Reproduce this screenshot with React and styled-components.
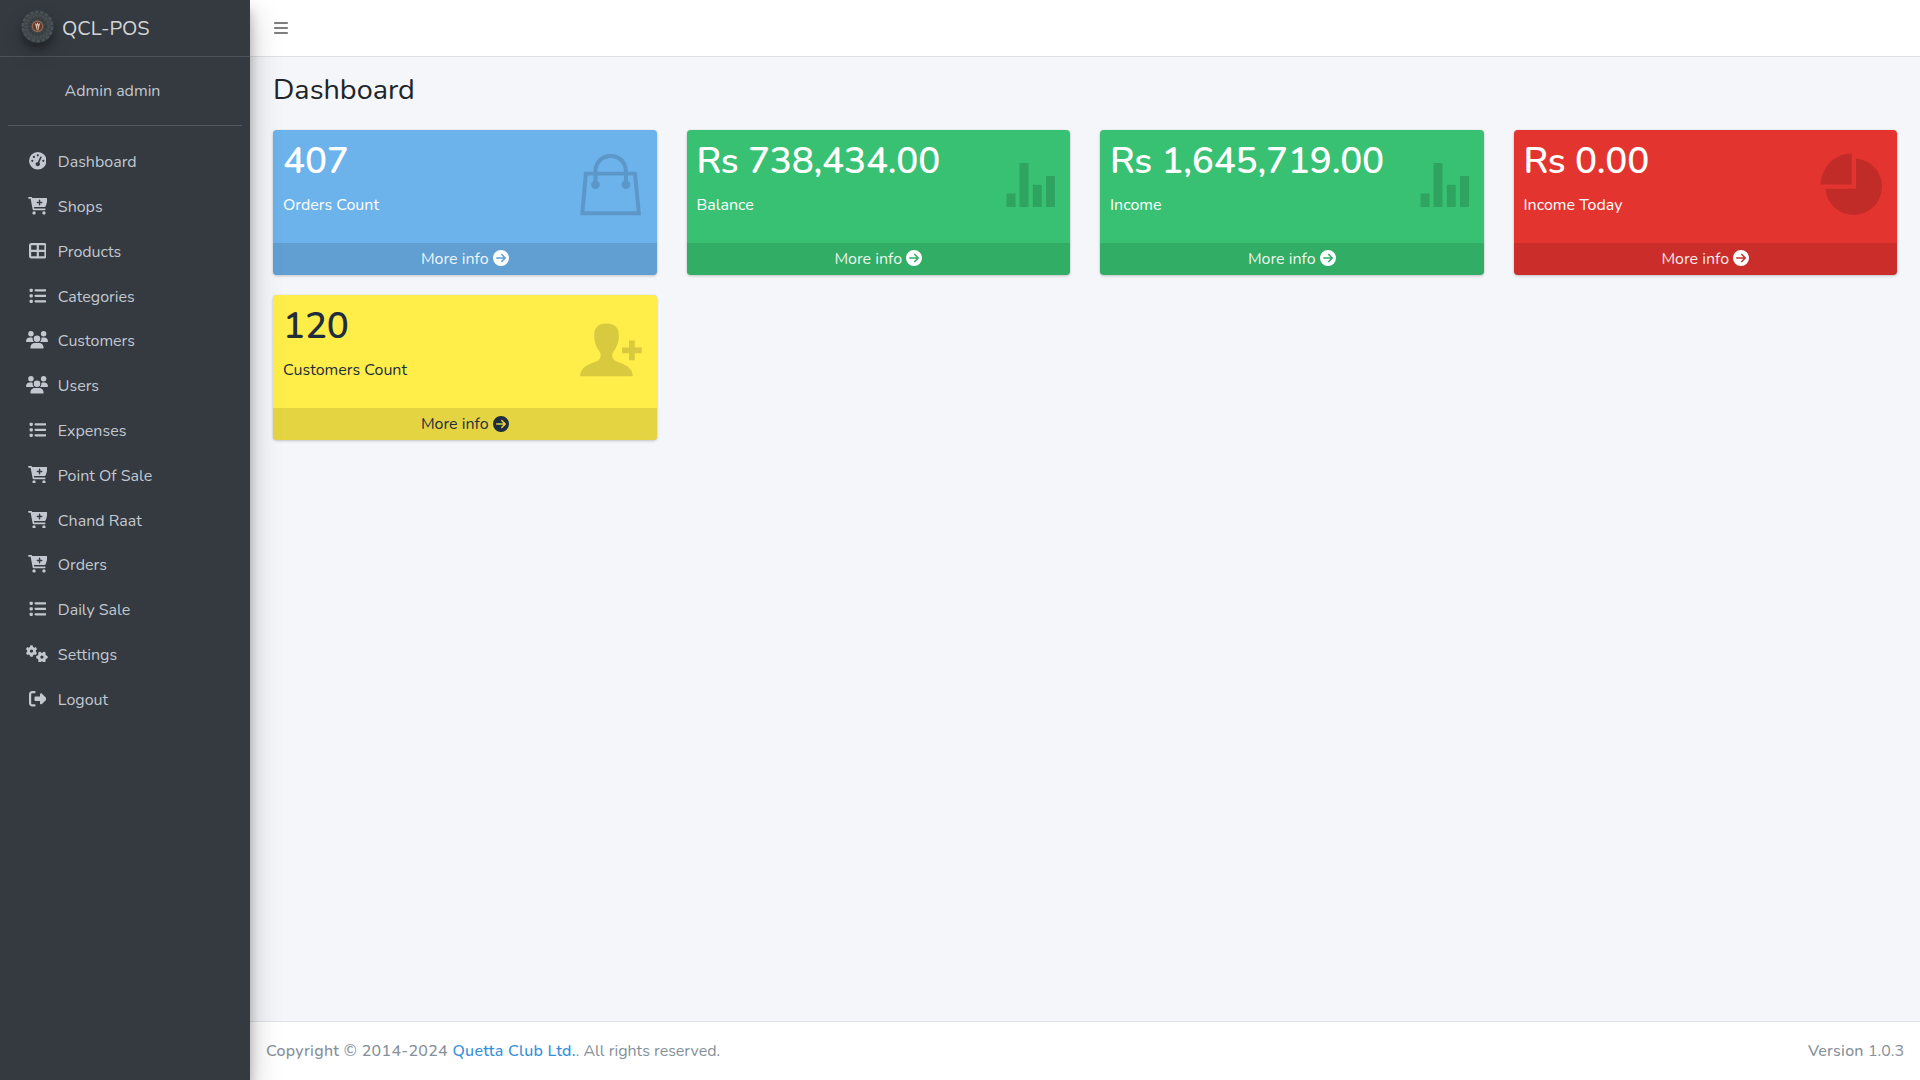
import React from "react";
import styled, { createGlobalStyle } from "styled-components";
import {
  FaBars,
  FaCircleArrowRight,
  FaGaugeHigh,
  FaGears,
  FaList,
  FaRightFromBracket,
  FaTableCellsLarge,
  FaUsers,
} from "react-icons/fa6";

const GlobalStyle = createGlobalStyle`
  *, *::before, *::after { box-sizing: border-box; }
  body {
    margin: 0;
    background: #f4f6f9;
    color: #212529;
    font-family: "Nunito", "Nunito Sans", "Lato", "Open Sans", sans-serif;
    font-size: 16px;
    line-height: 1.6;
  }
  a { color: inherit; text-decoration: none; }
`;

const Wrapper = styled.div`
  display: grid;
  grid-template-columns: 250px 1fr;
  height: 100vh;
  overflow: hidden;
`;

const Sidebar = styled.aside`
  position: relative;
  z-index: 2;
  display: flex;
  flex-direction: column;
  background: #343a40;
  color: #c2c7d0;
  box-shadow: 0 14px 28px rgba(0, 0, 0, 0.25), 0 10px 10px rgba(0, 0, 0, 0.22);
`;

const Brand = styled.a`
  display: flex;
  align-items: center;
  gap: 8px;
  height: 57px;
  padding: 1px 8px 0 21px;
  border-bottom: 1px solid #4b545c;
  color: rgba(255, 255, 255, 0.8);
  font-size: 20px;
  line-height: 1.5;
`;

const Logo = styled.svg`
  width: 33px;
  height: 33px;
  margin-top: -4px;
  border-radius: 50%;
  box-shadow: 0 10px 20px rgba(0, 0, 0, 0.19), 0 6px 6px rgba(0, 0, 0, 0.23);
`;

const UserPanel = styled.div`
  display: flex;
  align-items: center;
  height: 69px;
  margin: 0 8px;
  padding: 2px 0 0 56.6px;
  border-bottom: 1px solid #4f5962;
`;

const Nav = styled.nav`
  display: flex;
  flex-direction: column;
  gap: 3.2px;
  margin-top: 16.3px;
  padding: 0 8px;
`;

const NavLink = styled.a`
  display: flex;
  align-items: center;
  gap: 7px;
  height: 41.6px;
  padding: 8px 16px;
`;

const NavIcon = styled.span`
  display: flex;
  justify-content: center;
  width: 26.8px;
  margin-top: -4px;
  svg {
    width: ${(p) => p.$width}px;
    height: 17.6px;
    flex: none;
  }
`;

const Page = styled.div`
  display: flex;
  flex-direction: column;
  min-width: 0;
`;

const TopBar = styled.header`
  display: flex;
  align-items: center;
  height: 57px;
  padding-left: 23px;
  background: #fff;
  border-bottom: 1px solid #dee2e6;
  color: rgba(0, 0, 0, 0.5);
`;

const Content = styled.main`
  flex: 1;
  padding: 16px 23px 0;
`;

const Title = styled.h1`
  margin: 0 0 22px;
  font-size: 28.8px;
  font-weight: 400;
  line-height: 1.2;
`;

const Cards = styled.section`
  display: grid;
  grid-template-columns: repeat(4, 1fr);
  gap: 19.7px 30px;
`;

const Card = styled.article`
  overflow: hidden;
  border-radius: 4px;
  background: ${(p) => p.$bg};
  color: ${(p) => (p.$dark ? "#1f2d3d" : "#fff")};
  box-shadow: 0 0 1px rgba(0, 0, 0, 0.125), 0 1px 3px rgba(0, 0, 0, 0.2);
`;

const CardBody = styled.div`
  display: flex;
  justify-content: space-between;
  height: 113.8px;
  padding: 10px 15px 0 10px;
`;

const Value = styled.h3`
  margin: 0 0 11px;
  font-size: 36.8px;
  font-weight: 590;
  letter-spacing: -0.2px;
  line-height: 42.2px;
  white-space: nowrap;
`;

const Label = styled.p`
  margin: 0;
`;

const CardIcon = styled.svg`
  width: 64px;
  height: 64px;
  margin-top: 12.4px;
  color: rgba(0, 0, 0, 0.15);
  fill: currentColor;
`;

const CardFooter = styled.a`
  display: flex;
  align-items: center;
  justify-content: center;
  gap: 4px;
  height: 31.6px;
  padding-top: 1px;
  background: rgba(0, 0, 0, 0.1);
  color: ${(p) => (p.$dark ? "#1f2d3d" : "rgba(255, 255, 255, 0.92)")};
  svg {
    margin-top: -2.4px;
    color: ${(p) => (p.$dark ? "#1f2d3d" : "#fff")};
  }
`;

const PageFooter = styled.footer`
  display: flex;
  justify-content: space-between;
  padding: 17px 16px 15px;
  background: #fff;
  border-top: 1px solid #dee2e6;
  color: #869099;
`;

const Strong = styled.strong`
  font-weight: 540;
  letter-spacing: ${(p) => p.$spacing}px;
`;

const FooterLink = styled.a`
  color: #3490dc;
  letter-spacing: 0.25px;
`;

function CartPlus() {
  return (
    <svg viewBox="0 0 576 512" fill="currentColor">
      <path d="M96 0C107.5 0 117.4 8.19 119.6 19.51L121.1 32H541.8C562.1 32 578.3 52.25 572.6 72.66L518.6 264.7C514.7 278.5 502.1 288 487.8 288H170.7L179.9 336H488C501.3 336 512 346.7 512 360C512 373.3 501.3 384 488 384H159.1C148.5 384 138.6 375.8 136.4 364.5L76.14 48H24C10.75 48 0 37.25 0 24C0 10.75 10.75 0 24 0H96zM272 180H316V224C316 235 324.1 244 336 244C347 244 356 235 356 224V180H400C411 180 420 171 420 160C420 148.1 411 140 400 140H356V96C356 84.95 347 76 336 76C324.1 76 316 84.95 316 96V140H272C260.1 140 252 148.1 252 160C252 171 260.1 180 272 180zM128 464C128 437.5 149.5 416 176 416C202.5 416 224 437.5 224 464C224 490.5 202.5 512 176 512C149.5 512 128 490.5 128 464zM512 464C512 490.5 490.5 512 464 512C437.5 512 416 490.5 416 464C416 437.5 437.5 416 464 416C490.5 416 512 437.5 512 464z" />
    </svg>
  );
}

const NAV = [
  ["Dashboard", FaGaugeHigh, 17.6],
  ["Shops", CartPlus, 19.8],
  ["Products", FaTableCellsLarge, 17.6],
  ["Categories", FaList, 17.6],
  ["Customers", FaUsers, 22],
  ["Users", FaUsers, 22],
  ["Expenses", FaList, 17.6],
  ["Point Of Sale", CartPlus, 19.8],
  ["Chand Raat", CartPlus, 19.8],
  ["Orders", CartPlus, 19.8],
  ["Daily Sale", FaList, 17.6],
  ["Settings", FaGears, 22],
  ["Logout", FaRightFromBracket, 17.6],
];

const bag = (
  <path
    fillRule="evenodd"
    d="M6 19.7H15.5V18.8C15.5 9 23 1.9 32.7 1.9S49.9 9 49.9 18.8V19.7H58.8L63 63.2H2.2ZM19.5 19.7H45.9V18.8C45.9 11.3 40 5.9 32.7 5.9S19.5 11.3 19.5 18.8ZM9.7 23.6L6.5 59.3H58.7L55.2 23.6H49.9V28.7A4.4 4.4 0 1 1 45.9 28.7V23.6H19.5V28.7A4.4 4.4 0 1 1 15.5 28.7V23.6Z"
  />
);

const bars = (
  <>
    <path d="M15.5 41.5h9v13.5h-9z" />
    <path d="M28.5 11h9v44h-9z" />
    <path d="M41.8 32.7h9v22.3h-9z" />
    <path d="M55 24h9v31h-9z" />
  </>
);

const pie = (
  <>
    <path d="M33.7 1.5V32.5H2.7A31 31 0 0 1 33.7 1.5Z" />
    <path d="M38 6.5A28.3 28.3 0 1 1 7.5 36.7H38Z" />
  </>
);

const person = (
  <>
    <path d="M28.5 6.4C37 6.4 41 10.8 40.9 18.5C40.9 25 38.8 30.5 35.5 34.5C33.8 37 33.8 41 36.3 43C41.5 46.5 54.8 48 54.8 59.2H2.2C2.2 48 15.5 46.5 20.7 43C23.2 41 23.2 37 21.5 34.5C18.2 30.5 16.2 25 16.2 18.5C16.1 10.8 20 6.4 28.5 6.4Z" />
    <path d="M51 23.4h5.8v7h7v5.8h-7v7h-5.8v-7h-7v-5.8h7z" />
  </>
);

const CARDS = [
  { value: "407", label: "Orders Count", bg: "#6cb2eb", icon: bag },
  { value: "Rs 738,434.00", label: "Balance", bg: "#38c172", icon: bars },
  { value: "Rs 1,645,719.00", label: "Income", bg: "#38c172", icon: bars },
  { value: "Rs 0.00", label: "Income Today", bg: "#e3342f", icon: pie },
  { value: "120", label: "Customers Count", bg: "#ffed4a", icon: person, dark: true },
];

function BrandLogo() {
  return (
    <Logo viewBox="0 0 33 33">
      <circle cx="16.5" cy="16.5" r="14" fill="#40474b" />
      <circle cx="16.5" cy="16.5" r="14.7" fill="none" stroke="#4b5256" strokeWidth="2.4" strokeDasharray="3.6 1.5" />
      <circle cx="16.5" cy="16.5" r="11.2" fill="none" stroke="#4f565a" strokeWidth="1.6" strokeDasharray="1.2 2.2" />
      <circle cx="16.5" cy="16.5" r="8" fill="none" stroke="#363c40" strokeWidth="2.5" strokeDasharray="2 1.2" />
      <circle cx="16.5" cy="16.3" r="5.2" fill="#5f3a30" stroke="#94664f" strokeWidth="1.2" />
      <path d="M13.8 12.6L15.8 20.3H17.4L19.3 12.6L17.6 14.5L16.5 12.2L15.4 14.5Z" fill="#dcc3a6" />
      <path d="M16 15.5h1.1v4h-1.1z" fill="#b85a2c" />
    </Logo>
  );
}

export default function App() {
  return (
    <>
      <GlobalStyle />
      <Wrapper>
        <Sidebar>
          <Brand href="#">
            <BrandLogo />
            <span>QCL-POS</span>
          </Brand>
          <UserPanel>
            <a href="#">Admin admin</a>
          </UserPanel>
          <Nav>
            {NAV.map(([label, Icon, width]) => (
              <NavLink href="#" key={label}>
                <NavIcon $width={width}>
                  <Icon />
                </NavIcon>
                <span>{label}</span>
              </NavLink>
            ))}
          </Nav>
        </Sidebar>
        <Page>
          <TopBar>
            <FaBars />
          </TopBar>
          <Content>
            <Title>Dashboard</Title>
            <Cards>
              {CARDS.map((c) => (
                <Card key={c.label} $bg={c.bg} $dark={c.dark}>
                  <CardBody>
                    <div>
                      <Value>{c.value}</Value>
                      <Label>{c.label}</Label>
                    </div>
                    <CardIcon viewBox="0 0 64 64">{c.icon}</CardIcon>
                  </CardBody>
                  <CardFooter href="#" $dark={c.dark}>
                    <span>More info</span>
                    <FaCircleArrowRight />
                  </CardFooter>
                </Card>
              ))}
            </Cards>
          </Content>
          <PageFooter>
            <div>
              <Strong $spacing={0.3}>
                Copyright © 2014-2024 <FooterLink href="#">Quetta Club Ltd.</FooterLink>
              </Strong>
              . All rights reserved.
            </div>
            <div>
              <Strong $spacing={0.25}>Version</Strong> 1.0.3
            </div>
          </PageFooter>
        </Page>
      </Wrapper>
    </>
  );
}
